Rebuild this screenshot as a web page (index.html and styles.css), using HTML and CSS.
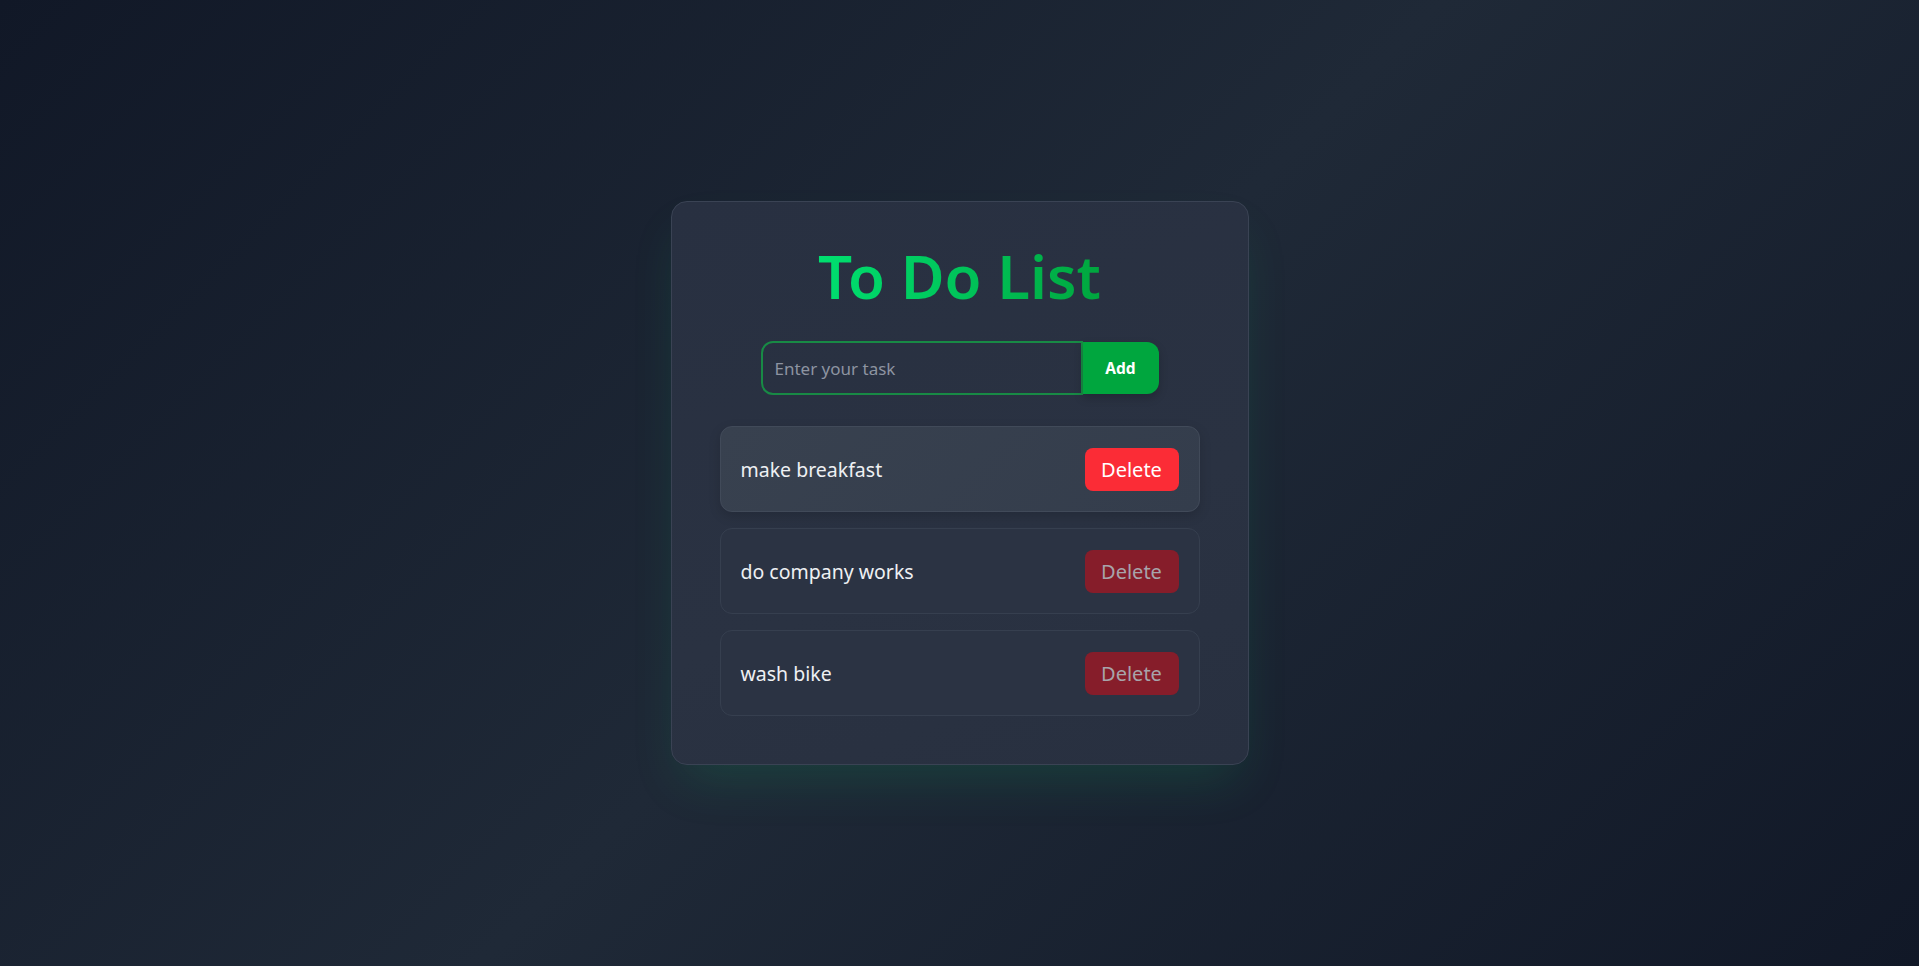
FILE: index.html
```html
<!DOCTYPE html>
<html lang="en">
<head>
<meta charset="utf-8">
<title>To Do List</title>
<link rel="stylesheet" href="styles.css">
</head>
<body>
  <main class="page">
    <section class="card">
      <h1 class="title">To Do List</h1>
      <form class="add-form">
        <input class="task-input" type="text" placeholder="Enter your task">
        <button class="add-btn" type="button">Add</button>
      </form>
      <ul class="task-list">
        <li class="task task--hover">
          <span class="task-text">make breakfast</span>
          <button class="del-btn del-btn--active" type="button">Delete</button>
        </li>
        <li class="task">
          <span class="task-text">do company works</span>
          <button class="del-btn" type="button">Delete</button>
        </li>
        <li class="task">
          <span class="task-text">wash bike</span>
          <button class="del-btn" type="button">Delete</button>
        </li>
      </ul>
    </section>
  </main>
</body>
</html>
```

FILE: styles.css
```css
* { box-sizing: border-box; }

html, body {
  margin: 0;
  height: 100%;
}

body {
  font-family: "Noto Sans", "Open Sans", sans-serif;
  background: linear-gradient(135deg, #111827 0%, #1f2937 50%, #111827 100%);
  color: #f3f4f6;
}

.page {
  min-height: 100vh;
  display: flex;
  justify-content: center;
  padding-top: 201px;
}

.card {
  width: 578px;
  height: 564px;
  padding: 40px 48px 48px;
  border: 1px solid #3a4354;
  border-radius: 16px;
  background: linear-gradient(160deg, #283041 0%, #2a3242 60%, #283040 100%);
  box-shadow: 0 25px 50px -12px rgba(16, 185, 100, 0.18);
  display: flex;
  flex-direction: column;
  align-items: center;
}

.title {
  margin: 0;
  font-size: 60px;
  line-height: 1.15;
  font-weight: 600;
  letter-spacing: 0;
  background: linear-gradient(90deg, #00e070 0%, #00c45a 50%, #00a63e 100%);
  -webkit-background-clip: text;
  background-clip: text;
  color: transparent;
}

.add-form {
  margin-top: 30px;
  display: flex;
  align-items: center;
}

.task-input {
  width: 322px;
  height: 54px;
  padding: 0 12px;
  border: 2px solid #188a45;
  border-radius: 12px 0 0 12px;
  background: transparent;
  color: #e5e7eb;
  font-family: inherit;
  font-size: 17px;
  outline: none;
}

.task-input::placeholder {
  color: #8d94a1;
}

.add-btn {
  width: 76px;
  height: 52px;
  border: none;
  border-radius: 0 12px 12px 0;
  background: #00a63e;
  color: #ffffff;
  font-family: inherit;
  font-size: 15.5px;
  font-weight: 700;
  box-shadow: 0 4px 10px rgba(0, 0, 0, 0.2);
}

.task-list {
  list-style: none;
  margin: 31px 0 0;
  padding: 0;
  width: 480px;
  display: flex;
  flex-direction: column;
  gap: 16px;
}

.task {
  display: flex;
  align-items: center;
  justify-content: space-between;
  height: 86px;
  padding: 0 20px;
  border: 1px solid #363f4f;
  border-radius: 12px;
  background: #2b3343;
}

.task--hover {
  background: linear-gradient(135deg, #38414f 0%, #343d4c 100%);
  border-color: #414a59;
  box-shadow: 0 4px 12px rgba(0, 0, 0, 0.15);
}

.task-text {
  font-size: 19.5px;
  color: #eef0f3;
}

.del-btn {
  width: 94px;
  height: 43px;
  border: none;
  border-radius: 8px;
  background: #861d2a;
  color: #a8a4ab;
  font-family: inherit;
  font-size: 20px;
}

.del-btn--active {
  background: #fb2c36;
  color: #ffffff;
}
```
